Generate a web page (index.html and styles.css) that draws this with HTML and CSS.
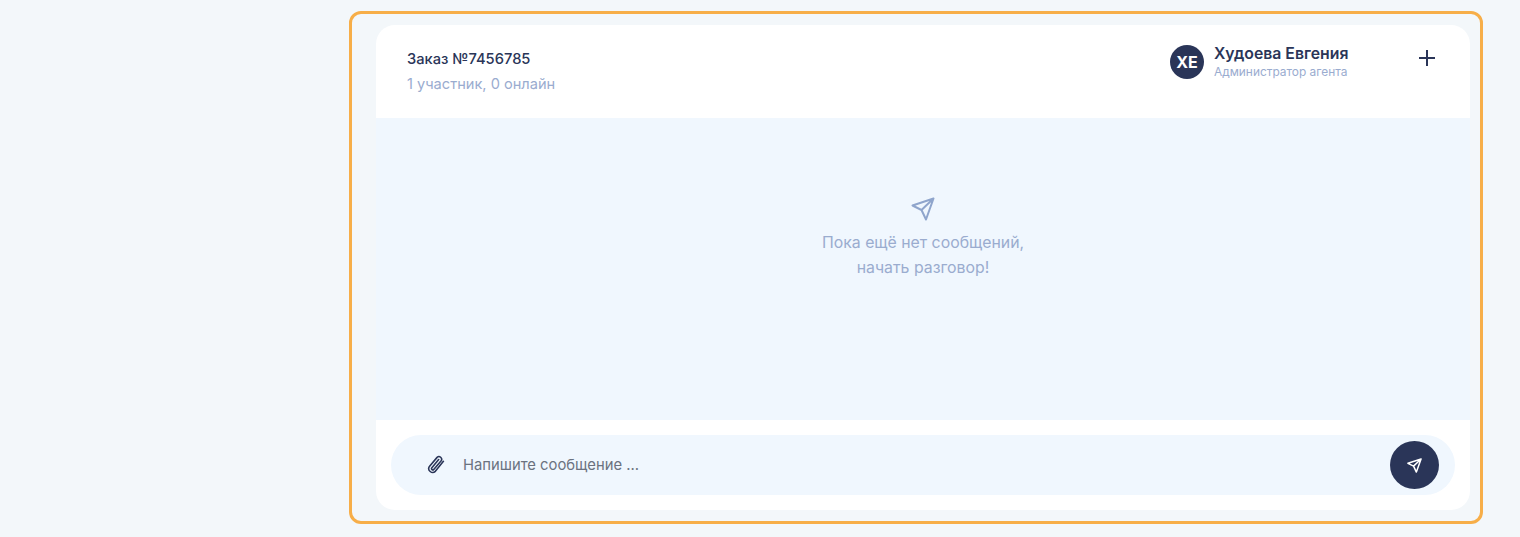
FILE: index.html
```html
<!DOCTYPE html>
<html lang="ru">
<head>
<meta charset="utf-8">
<title>Чат</title>
<link rel="stylesheet" href="styles.css">
</head>
<body>
<main class="frame">
  <section class="chat">
    <header class="head">
      <div class="order">
        <div class="order-title">Заказ №7456785</div>
        <div class="order-sub">1 участник, 0 онлайн</div>
      </div>
      <div class="user">
        <div class="avatar">ХЕ</div>
        <div class="user-info">
          <div class="user-name">Худоева Евгения</div>
          <div class="user-role">Администратор агента</div>
        </div>
      </div>
      <svg class="plus" width="16" height="16" viewBox="0 0 16 16" fill="none" stroke="#2a3558" stroke-width="2"><path d="M8 0v16M0 8h16"/></svg>
    </header>
    <div class="messages">
      <svg class="empty-icon" width="24" height="24" viewBox="0 0 24 24" fill="none" stroke="#8fa5cc" stroke-width="2" stroke-linejoin="round" stroke-linecap="round"><path d="M22.5 1.5 1.5 8.5l9 4.5 4.5 9.5zM10.5 13 22.5 1.5"/></svg>
      <p class="empty-text">Пока ещё нет сообщений,<br>начать разговор!</p>
    </div>
    <footer class="foot">
      <div class="composer">
        <svg class="clip" width="19" height="19" viewBox="0 0 24 24" fill="none" stroke="#2a3558" stroke-width="2" stroke-linecap="round" stroke-linejoin="round"><path d="M22 8 11.8 20.6a4.9 4.9 0 0 1-7.5-6.2L14 3a3.4 3.4 0 0 1 5.2 4.3L9.8 18.4a1.7 1.7 0 0 1-2.6-2.1L16 5.8"/></svg>
        <span class="placeholder">Напишите сообщение ...</span>
        <button class="send" type="button"><svg width="15" height="15" viewBox="0 0 24 24" fill="none" stroke="#fff" stroke-width="2.4" stroke-linejoin="round" stroke-linecap="round"><path d="M22.5 1.5 1.5 8.5l9 4.5 4.5 9.5zM10.5 13 22.5 1.5"/></svg></button>
      </div>
    </footer>
  </section>
</main>
</body>
</html>
```
FILE: styles.css
```css
* { box-sizing: border-box; }
html, body { height: 100%; }
body {
  margin: 0;
  background: #f3f7fa;
  font-family: Inter, "Noto Sans", sans-serif;
  overflow: hidden;
}
.frame {
  width: 1134px;
  height: 513px;
  margin: 11px 0 0 349px;
  border: 3px solid #f7ae48;
  border-radius: 12px;
  padding: 11px 10px 11px 24px;
}
.chat {
  height: 100%;
  background: #fff;
  border-radius: 19px;
  display: flex;
  flex-direction: column;
  overflow: hidden;
}
.head {
  height: 93px;
  flex: none;
  display: flex;
  padding: 0 35px 0 31px;
  align-items: flex-start;
}
.order { flex: 1; padding-top: 25px; }
.order-title { font-size: 14.7px; font-weight: 500; line-height: 18px; color: #2a3558; }
.order-sub { font-size: 14.6px; line-height: 18px; margin-top: 7px; color: #9aaccf; }
.user { display: flex; align-items: center; gap: 10px; margin-top: 20px; margin-right: 70px; }
.avatar {
  width: 34px; height: 34px; border-radius: 50%;
  background: #2a3558; color: #fff;
  font-size: 16px; font-weight: 700;
  display: flex; align-items: center; justify-content: center;
}
.user-info { width: 135px; }
.user-name { font-size: 15.8px; line-height: 18px; font-weight: 600; white-space: nowrap; color: #2a3558; position: relative; top: -1px; }
.user-role { font-size: 11.9px; line-height: 14px; margin-top: 1px; white-space: nowrap; color: #9aaccf; }
.plus { margin-top: 25px; flex: none; }
.messages {
  flex: 1;
  background: #f0f7fe;
  display: flex;
  flex-direction: column;
  align-items: center;
  padding-top: 79px;
}
.empty-text { margin: 9px 0 0; font-size: 15.85px; line-height: 25px; color: #9aaccf; text-align: center; }
.foot { height: 90px; flex: none; padding: 15px; }
.composer {
  height: 60px;
  background: #f0f7fe;
  border-radius: 30px;
  display: flex;
  align-items: center;
  padding: 0 16px 0 35px;
}
.clip { flex: none; position: relative; top: -1px; }
.placeholder { flex: 1; margin-left: 18px; font-size: 14.8px; color: #6b7280; }
.send {
  width: 49px; height: 48px; border: 0; border-radius: 50%;
  background: #2a3558; padding: 0;
  display: flex; align-items: center; justify-content: center;
}
```
